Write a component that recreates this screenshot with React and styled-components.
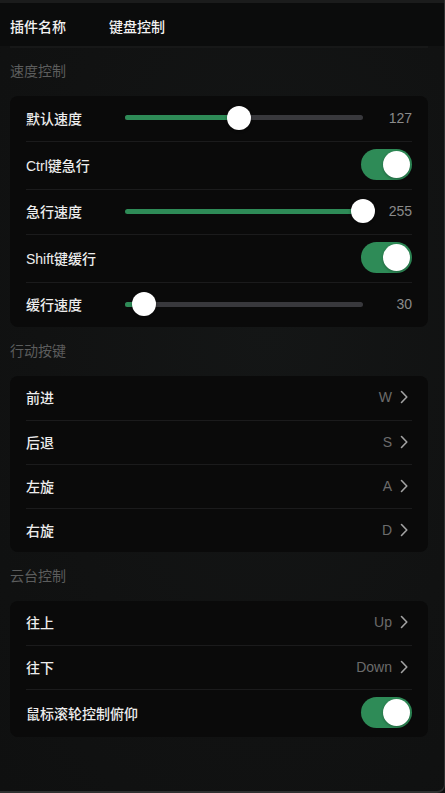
import React, { useState } from "react";
import styled, { createGlobalStyle } from "styled-components";

const GlobalStyle = createGlobalStyle`
  html, body {
    margin: 0;
    padding: 0;
    background: #0e0f0f;
  }
  * {
    box-sizing: border-box;
  }
`;

const font = `"Liberation Sans", "Noto Sans CJK SC", sans-serif`;

const Frame = styled.div`
  width: 100vw;
  height: 100vh;
  display: flex;
  flex-direction: column;
  background: radial-gradient(ellipse at 60% 40%, #141616 0%, #111212 60%, #0f1010 100%);
  border-right: 1px solid #2f3030;
  border-bottom: 2px solid #2f3030;
  border-bottom-right-radius: 8px;
  font-family: ${font};
  overflow: hidden;
`;

const Header = styled.div`
  height: 46px;
  display: flex;
  align-items: center;
  padding: 3px 10px 0 10px;
  background: #0b0c0c;
  border-top: 3px solid #1b1c1c;
  color: #f2f2f2;
  font-size: 14px;
  font-weight: 500;
`;

const HeaderTitle = styled.div`
  width: ${(p) => p.width || "auto"};
`;

const Content = styled.div`
  flex: 1;
  padding: 0 16px 0 10px;
  display: flex;
  flex-direction: column;
`;

const TopShade = styled.div`
  height: 2px;
  background: #171818;
`;

const SectionTitle = styled.div`
  padding: ${(p) => (p.first ? "14px 0 16px" : "15px 0 16px")};
  line-height: 18px;
  font-size: 14px;
  color: #5c5d5d;
`;

const Card = styled.div`
  background: #0a0a0a;
  border-radius: 8px;
  padding: 0 16px;
  display: flex;
  flex-direction: column;
`;

const Row = styled.div`
  min-height: ${(p) => (p.slider ? 45 : 44)}px;
  padding: 7px 0 9px;
  display: flex;
  align-items: center;
  border-top: ${(p) => (p.first ? "none" : "1px solid #1b1b1c")};
`;

const Label = styled.div`
  width: ${(p) => (p.fixed ? "99px" : "auto")};
  flex-shrink: 0;
  font-size: 14px;
  font-weight: 500;
  color: #ededed;
  white-space: nowrap;
`;

const Spacer = styled.div`
  flex: 1;
`;

const SliderWrap = styled.div`
  flex: 1;
  position: relative;
  height: 24px;
  display: flex;
  align-items: center;
`;

const Track = styled.div`
  width: 100%;
  height: 5px;
  border-radius: 3px;
  background: #38383c;
  overflow: hidden;
`;

const Fill = styled.div`
  height: 100%;
  background: #2e8b57;
`;

const Thumb = styled.div`
  position: absolute;
  top: 0;
  width: 24px;
  height: 24px;
  margin-left: -12px;
  border-radius: 50%;
  background: #ffffff;
  box-shadow: 0 1px 3px rgba(0, 0, 0, 0.4);
`;

const Value = styled.div`
  width: 49px;
  text-align: right;
  font-size: 14px;
  color: #8b8b8b;
`;

const KeyValue = styled.div`
  font-size: 14px;
  color: #6c6c6c;
  margin-right: 8px;
`;

const Chevron = styled.svg`
  width: 8px;
  height: 14px;
  margin-right: 4px;
  flex-shrink: 0;
`;

const Switch = styled.button`
  width: 51px;
  height: 31px;
  border: none;
  padding: 0;
  border-radius: 16px;
  background: ${(p) => (p.on ? "#2e8b57" : "#3a3a3c")};
  position: relative;
  cursor: pointer;
  flex-shrink: 0;

  &::after {
    content: "";
    position: absolute;
    top: 2px;
    left: ${(p) => (p.on ? "22px" : "2px")};
    width: 27px;
    height: 27px;
    border-radius: 50%;
    background: #ffffff;
    box-shadow: 0 1px 3px rgba(0, 0, 0, 0.3);
  }
`;

const MIN = 10;
const MAX = 255;

function SliderRow({ label, value, first }) {
  const pct = ((value - MIN) / (MAX - MIN)) * 100;
  return (
    <Row slider first={first}>
      <Label fixed>{label}</Label>
      <SliderWrap>
        <Track>
          <Fill style={{ width: `${pct}%` }} />
        </Track>
        <Thumb style={{ left: `${pct}%` }} />
      </SliderWrap>
      <Value>{value}</Value>
    </Row>
  );
}

function ToggleRow({ label, first }) {
  const [on, setOn] = useState(true);
  return (
    <Row first={first}>
      <Label>{label}</Label>
      <Spacer />
      <Switch on={on ? 1 : 0} onClick={() => setOn(!on)} />
    </Row>
  );
}

function KeyRow({ label, keyName, first }) {
  return (
    <Row first={first}>
      <Label>{label}</Label>
      <Spacer />
      <KeyValue>{keyName}</KeyValue>
      <Chevron viewBox="0 0 8 14">
        <path d="M1.5 1.5 L6.8 7 L1.5 12.5" fill="none" stroke="#a3a3a3" strokeWidth="1.6" strokeLinecap="round" strokeLinejoin="round" />
      </Chevron>
    </Row>
  );
}

export default function App() {
  return (
    <>
      <GlobalStyle />
      <Frame>
        <Header>
          <HeaderTitle width="99px">插件名称</HeaderTitle>
          <HeaderTitle>键盘控制</HeaderTitle>
        </Header>
        <Content>
          <TopShade />
          <SectionTitle first>速度控制</SectionTitle>
          <Card>
            <SliderRow first label="默认速度" value={127} />
            <ToggleRow label="Ctrl键急行" />
            <SliderRow label="急行速度" value={255} />
            <ToggleRow label="Shift键缓行" />
            <SliderRow label="缓行速度" value={30} />
          </Card>

          <SectionTitle>行动按键</SectionTitle>
          <Card>
            <KeyRow first label="前进" keyName="W" />
            <KeyRow label="后退" keyName="S" />
            <KeyRow label="左旋" keyName="A" />
            <KeyRow label="右旋" keyName="D" />
          </Card>

          <SectionTitle>云台控制</SectionTitle>
          <Card>
            <KeyRow first label="往上" keyName="Up" />
            <KeyRow label="往下" keyName="Down" />
            <ToggleRow label="鼠标滚轮控制俯仰" />
          </Card>
        </Content>
      </Frame>
    </>
  );
}
